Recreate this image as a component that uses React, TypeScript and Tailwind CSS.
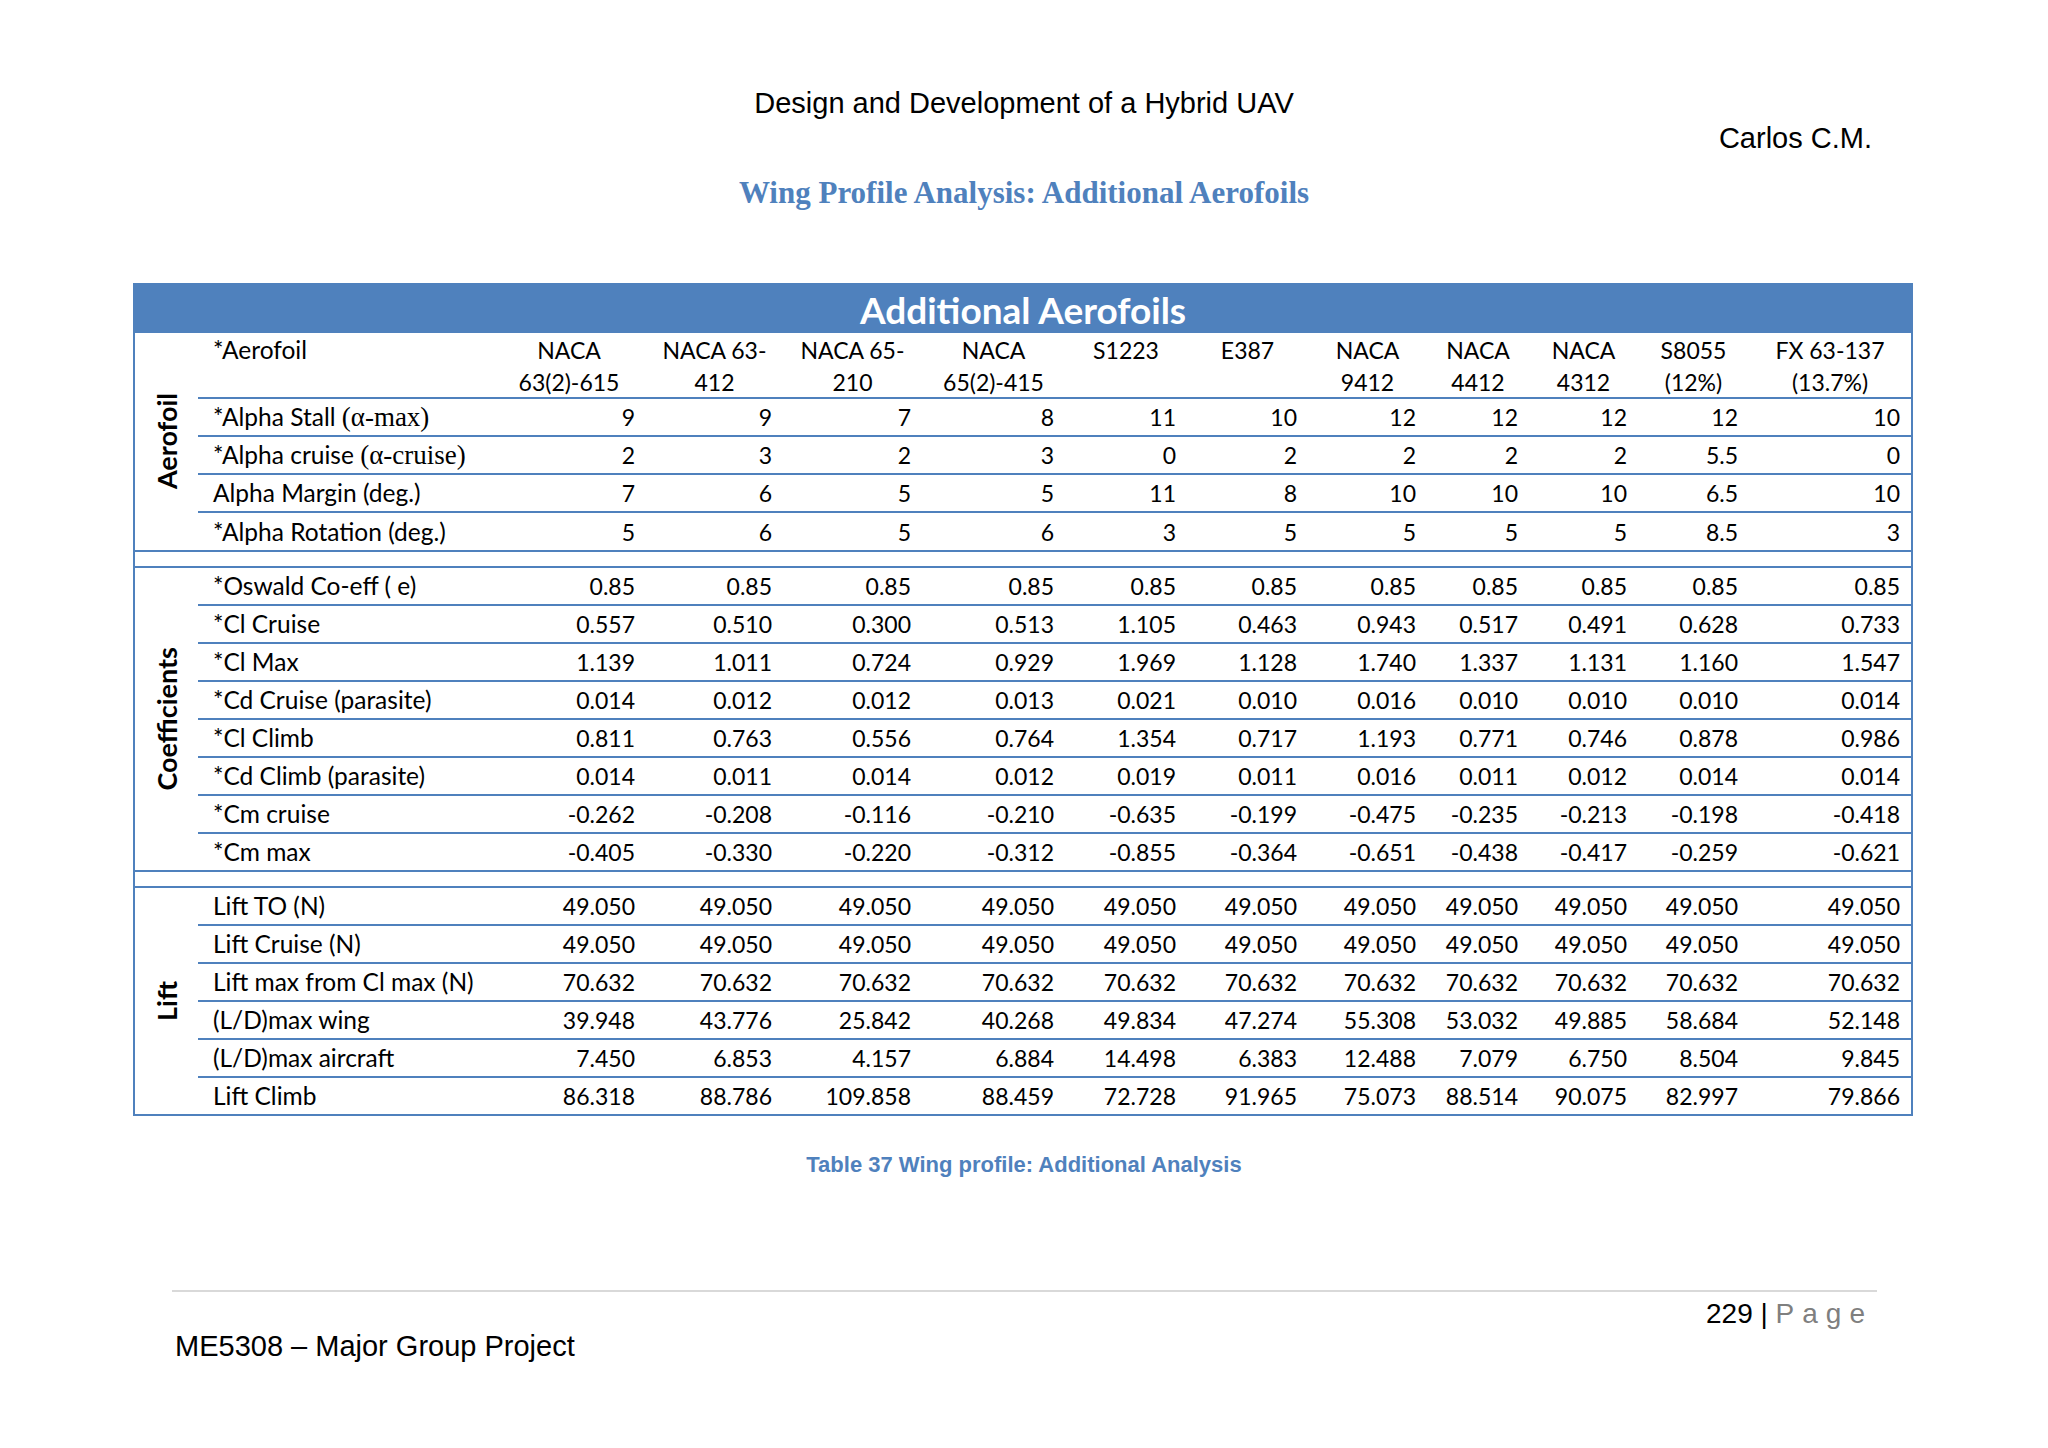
import React from "react";

const heads: [string, string][] = [
  ["NACA", "63(2)-615"],
  ["NACA 63-", "412"],
  ["NACA 65-", "210"],
  ["NACA", "65(2)-415"],
  ["S1223", ""],
  ["E387", ""],
  ["NACA", "9412"],
  ["NACA", "4412"],
  ["NACA", "4312"],
  ["S8055", "(12%)"],
  ["FX 63-137", "(13.7%)"],
];

type R = { label: React.ReactNode; v: string[] };

const Serif = ({ children }: { children: React.ReactNode }) => (
  <span className="font-['Liberation_Serif',serif] text-[27px] leading-[0]">{children}</span>
);

const rep = (s: string) => Array(11).fill(s);

const aerofoil: R[] = [
  { label: <>*Alpha Stall <Serif>(α-max)</Serif></>, v: ["9", "9", "7", "8", "11", "10", "12", "12", "12", "12", "10"] },
  { label: <>*Alpha cruise <Serif>(α-cruise)</Serif></>, v: ["2", "3", "2", "3", "0", "2", "2", "2", "2", "5.5", "0"] },
  { label: "Alpha Margin (deg.)", v: ["7", "6", "5", "5", "11", "8", "10", "10", "10", "6.5", "10"] },
  { label: "*Alpha Rotation (deg.)", v: ["5", "6", "5", "6", "3", "5", "5", "5", "5", "8.5", "3"] },
];

const coeffs: R[] = [
  { label: "*Oswald Co-eff ( e)", v: rep("0.85") },
  { label: "*Cl Cruise", v: ["0.557", "0.510", "0.300", "0.513", "1.105", "0.463", "0.943", "0.517", "0.491", "0.628", "0.733"] },
  { label: "*Cl Max", v: ["1.139", "1.011", "0.724", "0.929", "1.969", "1.128", "1.740", "1.337", "1.131", "1.160", "1.547"] },
  { label: "*Cd Cruise (parasite)", v: ["0.014", "0.012", "0.012", "0.013", "0.021", "0.010", "0.016", "0.010", "0.010", "0.010", "0.014"] },
  { label: "*Cl Climb", v: ["0.811", "0.763", "0.556", "0.764", "1.354", "0.717", "1.193", "0.771", "0.746", "0.878", "0.986"] },
  { label: "*Cd Climb (parasite)", v: ["0.014", "0.011", "0.014", "0.012", "0.019", "0.011", "0.016", "0.011", "0.012", "0.014", "0.014"] },
  { label: "*Cm cruise", v: ["-0.262", "-0.208", "-0.116", "-0.210", "-0.635", "-0.199", "-0.475", "-0.235", "-0.213", "-0.198", "-0.418"] },
  { label: "*Cm max", v: ["-0.405", "-0.330", "-0.220", "-0.312", "-0.855", "-0.364", "-0.651", "-0.438", "-0.417", "-0.259", "-0.621"] },
];

const lift: R[] = [
  { label: "Lift TO (N)", v: rep("49.050") },
  { label: "Lift Cruise (N)", v: rep("49.050") },
  { label: "Lift max from Cl max (N)", v: rep("70.632") },
  { label: "(L/D)max wing", v: ["39.948", "43.776", "25.842", "40.268", "49.834", "47.274", "55.308", "53.032", "49.885", "58.684", "52.148"] },
  { label: "(L/D)max aircraft", v: ["7.450", "6.853", "4.157", "6.884", "14.498", "6.383", "12.488", "7.079", "6.750", "8.504", "9.845"] },
  { label: "Lift Climb", v: ["86.318", "88.786", "109.858", "88.459", "72.728", "91.965", "75.073", "88.514", "90.075", "82.997", "79.866"] },
];

const GRID =
  "grid grid-cols-[294px_154px_137px_139px_143px_122px_121px_119px_102px_109px_111px_162px]";

function DataRow({ r, h, last }: { r: R; h: string; last?: boolean }) {
  return (
    <div className={`${GRID} ${h} ${last ? "" : "border-b-2 border-[#4f81bd]"} items-center`}>
      <div className="pl-[15px] whitespace-nowrap text-[24.5px] leading-[30px]">{r.label}</div>
      {r.v.map((x, i) => (
        <div key={i} className="text-right pr-[11px] whitespace-nowrap leading-[30px]">
          {x}
        </div>
      ))}
    </div>
  );
}

function GroupLabel({ text }: { text: string }) {
  return (
    <div className="w-[63px] shrink-0 flex items-center justify-center">
      <span className="[writing-mode:vertical-rl] rotate-180 font-bold text-[27px] leading-none">
        {text}
      </span>
    </div>
  );
}

function Section({ label, rows, lastH, border, header }: { label: string; rows: R[]; lastH: string; border: boolean; header?: boolean }) {
  return (
    <div className={`flex ${border ? "border-b-2 border-[#4f81bd]" : ""}`}>
      <GroupLabel text={label} />
      <div className="flex-1 flex flex-col">
        {header && (
          <div className={`${GRID} h-[66px] border-b-2 border-[#4f81bd] items-start pt-[1px] leading-[32px]`}>
            <div className="pl-[15px] text-[24.5px]">*Aerofoil</div>
            {heads.map(([a, b], i) => (
              <div key={i} className="text-center whitespace-nowrap flex flex-col">
                <span>{a}</span>
                <span>{b || "\u00a0"}</span>
              </div>
            ))}
          </div>
        )}
        {rows.map((r, i) => (
          <DataRow key={i} r={r} h={i === rows.length - 1 ? lastH : "h-[38px]"} last={i === rows.length - 1} />
        ))}
      </div>
    </div>
  );
}

export default function App() {
  return (
    <div className="w-[2048px] h-[1448px] bg-white flex flex-col text-black font-['Liberation_Sans',Arial,sans-serif]">
      <div className="mt-[85px] h-[36px] leading-[36px] text-center text-[29px]">
        Design and Development of a Hybrid UAV
      </div>
      <div className="h-[34px] leading-[34px] text-right pr-[176px] text-[29px]">Carlos C.M.</div>
      <div className="h-[76px] leading-[76px] text-center text-[31px] font-bold text-[#4f81bd] font-['Liberation_Serif',serif]">
        Wing Profile Analysis: Additional Aerofoils
      </div>

      <div className="mt-[52px] ml-[133px] w-[1780px] border-2 border-[#4f81bd] flex flex-col font-['Lato',sans-serif] text-[23px]">
        <div className="h-[48px] bg-[#4f81bd] text-white font-bold text-[37px] flex items-center justify-center leading-none">
          Additional Aerofoils
        </div>
        <Section label="Aerofoil" rows={aerofoil} lastH="h-[37px]" border header />
        <div className="h-[16px] border-b-2 border-[#4f81bd]" />
        <Section label="Coefficients" rows={coeffs} lastH="h-[36px]" border />
        <div className="h-[16px] border-b-2 border-[#4f81bd]" />
        <Section label="Lift" rows={lift} lastH="h-[36px]" border={false} />
      </div>

      <div className="h-[98px] leading-[98px] text-center text-[22px] font-bold text-[#4f81bd]">
        Table 37 Wing profile: Additional Analysis
      </div>

      <div className="mt-[76px] ml-[172px] w-[1705px] h-[2px] bg-[#d9d9d9]" />
      <div className="h-[42px] leading-[42px] pt-[1px] text-right pr-[175px] text-[28px]">
        229 | <span className="text-[#7f7f7f] tracking-[8px]">Page</span>
      </div>
      <div className="h-[24px] leading-[24px] pl-[175px] text-[29px]">ME5308 – Major Group Project</div>
    </div>
  );
}
